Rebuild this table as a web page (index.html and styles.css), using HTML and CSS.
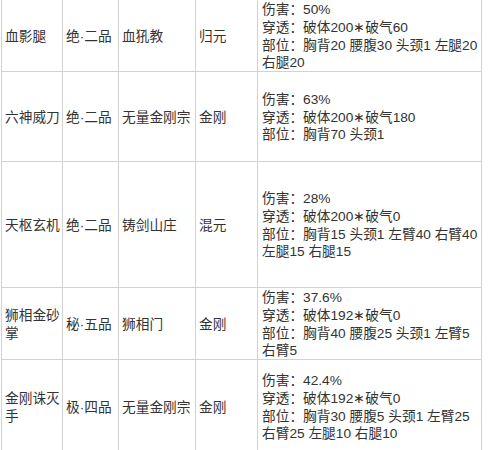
FILE: index.html
```html
<!DOCTYPE html>
<html lang="zh-CN">
<head>
<meta charset="utf-8">
<title>武学</title>
<link rel="stylesheet" href="styles.css">
</head>
<body>
<div class="sheet">
  <div class="cell">血影腿</div>
  <div class="cell">绝·二品</div>
  <div class="cell">血犼教</div>
  <div class="cell">归元</div>
  <div class="cell info">
    <div>伤害：50%</div>
    <div>穿透：破体200∗破气60</div>
    <div>部位：胸背20 腰腹30 头颈1 左腿20</div>
    <div>右腿20</div>
  </div>

  <div class="cell">六神威刀</div>
  <div class="cell">绝·二品</div>
  <div class="cell">无量金刚宗</div>
  <div class="cell">金刚</div>
  <div class="cell info">
    <div>伤害：63%</div>
    <div>穿透：破体200∗破气180</div>
    <div>部位：胸背70 头颈1</div>
  </div>

  <div class="cell">天枢玄机</div>
  <div class="cell">绝·二品</div>
  <div class="cell">铸剑山庄</div>
  <div class="cell">混元</div>
  <div class="cell info">
    <div>伤害：28%</div>
    <div>穿透：破体200∗破气0</div>
    <div>部位：胸背15 头颈1 左臂40 右臂40</div>
    <div>左腿15 右腿15</div>
  </div>

  <div class="cell">狮相金砂掌</div>
  <div class="cell">秘·五品</div>
  <div class="cell">狮相门</div>
  <div class="cell">金刚</div>
  <div class="cell info">
    <div>伤害：37.6%</div>
    <div>穿透：破体192∗破气0</div>
    <div>部位：胸背40 腰腹25 头颈1 左臂5</div>
    <div>右臂5</div>
  </div>

  <div class="cell">金刚诛灭手</div>
  <div class="cell">极·四品</div>
  <div class="cell">无量金刚宗</div>
  <div class="cell">金刚</div>
  <div class="cell info">
    <div>伤害：42.4%</div>
    <div>穿透：破体192∗破气0</div>
    <div>部位：胸背30 腰腹5 头颈1 左臂25</div>
    <div>右臂25 左腿10 右腿10</div>
  </div>
</div>
</body>
</html>
```
FILE: styles.css
```css
html, body {
  margin: 0;
  padding: 0;
  background: #ffffff;
  overflow: hidden;
}

body {
  font-family: "Liberation Sans", "Noto Sans CJK SC", sans-serif;
  font-size: 13.7px;
  line-height: 17.6px;
  color: #333333;
}

.sheet {
  display: grid;
  grid-template-columns: 61px 56px 77px 62px 224px;
  grid-template-rows: 72px 90px 126px 72px 94px;
  margin-left: 1px;
  border-left: 1px solid #d2d2d2;
  width: max-content;
}

.cell {
  display: flex;
  flex-direction: column;
  justify-content: center;
  padding: 2px 0 0 3px;
  border-right: 1px solid #d2d2d2;
  border-bottom: 1px solid #d2d2d2;
  box-sizing: border-box;
  overflow: hidden;
}

.info {
  padding-left: 4px;
  white-space: nowrap;
}
```
